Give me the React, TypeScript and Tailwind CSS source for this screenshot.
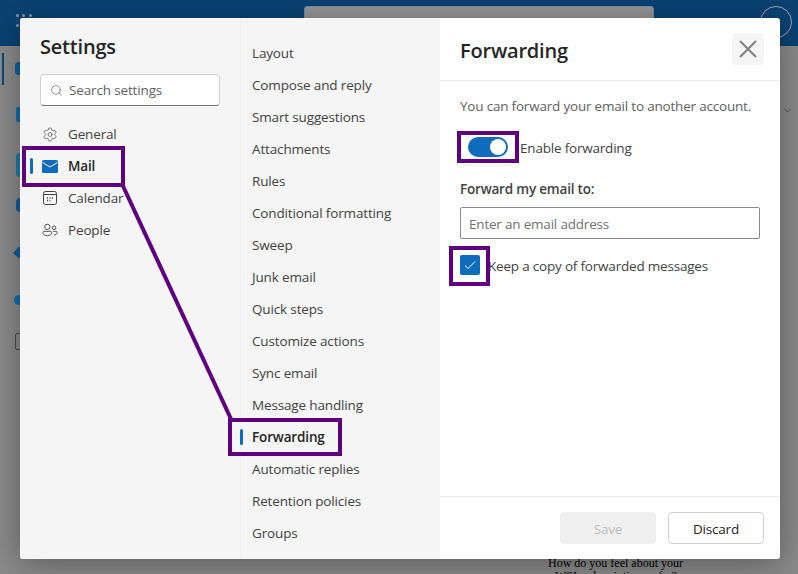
import React from 'react';
import { Search, Settings, ChevronDown } from 'lucide-react';

const mailNav = [
  'Layout', 'Compose and reply', 'Smart suggestions', 'Attachments', 'Rules',
  'Conditional formatting', 'Sweep', 'Junk email', 'Quick steps', 'Customize actions',
  'Sync email', 'Message handling', 'Forwarding', 'Automatic replies', 'Retention policies', 'Groups',
];

function MailIcon() {
  return (
    <svg width="16" height="13" viewBox="0 0 16 13">
      <rect width="16" height="13" rx="1.5" fill="#0f6cbd" />
      <path d="M0.5 2.5 L8 7 L15.5 2.5" fill="none" stroke="#fff" strokeWidth="1" />
    </svg>
  );
}

function CalendarIcon() {
  return (
    <svg width="16" height="16" viewBox="0 0 16 16" fill="none" stroke="#424242">
      <rect x="1.5" y="1.5" width="13" height="13" rx="2" />
      <path d="M1.5 4.5 H14.5" />
      <path d="M5 8 h1 M7.5 8 h1 M10 8 h1 M5 10.5 h1 M7.5 10.5 h1" strokeWidth="1.4" />
    </svg>
  );
}

function PeopleIcon() {
  return (
    <svg width="18" height="16" viewBox="0 0 18 16" fill="none" stroke="#424242">
      <circle cx="6" cy="4.5" r="3" />
      <circle cx="13.5" cy="5.5" r="2" />
      <path d="M1 11 a1.5 1.5 0 0 1 1.5 -1.5 h7 a1.5 1.5 0 0 1 1.5 1.5 c0 2 -2 3.5 -5 3.5 s-5 -1.5 -5 -3.5 Z" />
      <path d="M12.5 9.5 h3 a1.5 1.5 0 0 1 1.5 1.5 c0 1.6 -1.4 2.6 -3.6 2.6" />
    </svg>
  );
}

function SideItem({ label, active, icon }: { label: string; active?: boolean; icon: React.ReactNode }) {
  return (
    <div className="relative flex h-8 items-center pl-[2px]">
      {active && <span className="absolute left-[-10px] top-[8px] h-4 w-[3px] rounded-sm bg-[#0f6cbd]"></span>}
      <span className="flex w-4 justify-center">{icon}</span>
      <span className={`ml-[10px] ${active ? 'font-semibold text-[#242424]' : 'text-[#424242]'}`}>{label}</span>
    </div>
  );
}

export default function App() {
  return (
    <div className="relative h-[574px] w-[798px] overflow-hidden bg-[#8a8a8a] font-['Open_Sans',sans-serif] text-[13.5px] tracking-[-0.15px]">
      {/* blurred mailbox behind the dialog */}
      <div className="relative flex h-[46px] bg-[#0a4273]">
        <div className="ml-[16px] mt-[14px] grid h-[16px] w-[16px] grid-cols-3 gap-[3px]">
          {Array.from({ length: 6 }).map((_, i) => (
            <span key={i} className="h-[3px] w-[3px] rounded-full bg-[#8c98a6]"></span>
          ))}
        </div>
        <div className="ml-[272px] mt-[6px] h-[20px] w-[350px] rounded-t-[3px] border border-[#7d8a96] bg-[#969696]"></div>
        <div className="ml-auto mr-[6px] mt-[6px] h-[32px] w-[32px] rounded-full border border-[#9aa7b4]"></div>
      </div>
      <div className="flex h-[528px]">
        <div className="relative flex w-[20px] flex-col blur-[0.5px]">
          <span className="absolute left-[2px] top-[7px] h-[32px] w-[2px] bg-[#0c4a80]"></span>
          <span className="ml-[15px] mt-[16px] h-[13px] w-[8px] rounded-l-[4px] bg-[#0f5e9c]"></span>
          <span className="ml-[16px] mt-[32px] h-[15px] w-[8px] rounded-[2px] bg-[#0f6cae]"></span>
          <span className="ml-[16px] mt-[31px] h-[24px] w-[8px] rounded-l-[4px] bg-[#1d7ba8]"></span>
          <span className="ml-[16px] mt-[21px] h-[14px] w-[8px] rounded-l-[4px] bg-[#0f5e9c]"></span>
          <span className="ml-[15px] mt-[36px] h-[9px] w-[8px] rotate-45 bg-[#0f5e9c]"></span>
          <span className="ml-[14px] mt-[38px] h-[10px] w-[10px] rounded-full bg-[#0f6cae]"></span>
          <span className="ml-[15px] mt-[28px] h-[17px] w-[8px] rounded-l-[2px] border border-[#4a4a4a]"></span>
        </div>
        <div className="ml-auto mr-[4px] mt-[58px]">
          <ChevronDown size={13} strokeWidth={1} className="text-[#2c2c2c]" />
        </div>
      </div>
      <div className="absolute bottom-[-9px] left-[548px] font-['Liberation_Serif',serif] text-[12px] leading-[13px] tracking-normal text-black">
        <p>How do you feel about your</p>
        <p className="pl-[7px]">WSL subscription so far?</p>
      </div>

      {/* settings dialog */}
      <div className="absolute left-[20px] top-[18px] flex h-[541px] w-[760px] overflow-hidden rounded-[3px] bg-white shadow-[0_4px_32px_rgba(0,0,0,0.35)]">
        <div className="w-[220px] bg-[#f5f5f5] pl-[20px] pr-[20px] pt-[15px]">
          <h1 className="text-[20px] font-semibold leading-[28px] tracking-[-0.2px] text-[#242424]">Settings</h1>
          <div className="mt-[13px] flex h-8 items-center rounded border border-b-[#757575] border-l-[#d1d1d1] border-r-[#d1d1d1] border-t-[#d1d1d1] bg-white pl-[9px]">
            <Search size={13} strokeWidth={1.25} className="text-[#616161]" />
            <span className="ml-[6px] text-[#616161]">Search settings</span>
          </div>
          <div className="mt-[12px]">
            <SideItem label="General" icon={<Settings size={21} strokeWidth={1} className="text-[#424242]" />} />
            <SideItem label="Mail" active icon={<MailIcon />} />
            <SideItem label="Calendar" icon={<CalendarIcon />} />
            <SideItem label="People" icon={<PeopleIcon />} />
          </div>
        </div>
        <div className="w-[200px] border-l border-[#f0f0f0] bg-[#f5f5f5] pl-[11px] pt-[19px]">
          {mailNav.map((item) => (
            <div key={item} className="relative flex h-8 items-center">
              {item === 'Forwarding' && <span className="absolute left-[-12px] top-[8px] h-4 w-[3px] rounded-sm bg-[#0f6cbd]"></span>}
              <span className={item === 'Forwarding' ? 'font-semibold text-[#242424]' : 'text-[#424242]'}>{item}</span>
            </div>
          ))}
        </div>
        <div className="flex w-[340px] flex-col tracking-[-0.2px]">
          <div className="flex h-[63px] items-center justify-between border-b border-[#ebebeb] pl-[20px] pr-[16px]">
            <h2 className="mt-[3px] text-[20px] font-semibold tracking-[-0.2px] text-[#242424]">Forwarding</h2>
            <button className="flex h-8 w-8 items-center justify-center rounded bg-[#f5f5f5]">
              <svg width="18" height="18" viewBox="0 0 18 18" stroke="#7f7f7f" strokeWidth="2" fill="none">
                <path d="M1 1 L17 17 M17 1 L1 17" />
              </svg>
            </button>
          </div>
          <div className="flex-1 pl-[20px] pr-[20px] pt-[15px]">
            <p className="leading-[20px] text-[#616161]">You can forward your email to another account.</p>
            <div className="mt-[21px] flex h-[20px] items-center pl-[8px]">
              <span className="flex h-[20px] w-[40px] items-center justify-end rounded-full bg-[#0f6cbd] pr-[2px]">
                <span className="h-[16px] w-[16px] rounded-full bg-white"></span>
              </span>
              <span className="ml-[12px] pt-[2px] text-[#424242]">Enable forwarding</span>
            </div>
            <p className="mt-[22px] font-semibold leading-[20px] text-[#424242]">Forward my email to:</p>
            <div className="mt-[8px] flex h-8 items-center rounded-[2px] border border-[#8a8a8a] pl-[8px] pt-[2px] text-[#707070]">Enter an email address</div>
            <div className="mt-[16px] flex h-[20px] items-center">
              <span className="flex h-[20px] w-[20px] items-center justify-center rounded-[2px] bg-[#0f6cbd]">
                <svg width="12" height="10" viewBox="0 0 12 10" fill="none" stroke="#fff" strokeWidth="1">
                  <path d="M1 5.5 L4.2 8.5 L11 1.5" />
                </svg>
              </span>
              <span className="ml-[8px] pt-[2px] text-[#424242]">Keep a copy of forwarded messages</span>
            </div>
          </div>
          <div className="flex h-[63px] items-start justify-end gap-3 border-t border-[#ebebeb] pr-[16px] pt-[15px]">
            <button className="h-8 w-[96px] rounded bg-[#f0f0f0] pt-[2px] font-medium text-[#bdbdbd]">Save</button>
            <button className="h-8 w-[96px] rounded border border-[#d1d1d1] bg-white pt-[2px] font-medium text-[#242424]">Discard</button>
          </div>
        </div>
      </div>

      {/* purple callouts drawn on top of the shot */}
      <div className="absolute left-[22px] top-[146px] h-[41px] w-[103px] border-4 border-[#5f007f]"></div>
      <div className="absolute left-[228px] top-[418px] h-[38px] w-[114px] border-4 border-[#5f007f]"></div>
      <div className="absolute left-[457px] top-[131px] h-[32px] w-[62px] border-4 border-[#5f007f]"></div>
      <div className="absolute left-[449px] top-[246px] h-[40px] w-[41px] border-4 border-[#5f007f]"></div>
      <svg className="absolute left-0 top-0" width="798" height="574" fill="none">
        <path d="M123 186 L231 419" stroke="#5f007f" strokeWidth="4" />
      </svg>
    </div>
  );
}
